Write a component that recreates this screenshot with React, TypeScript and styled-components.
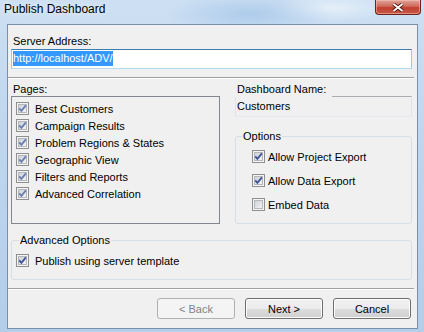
import * as React from 'react';
import styled, { createGlobalStyle } from 'styled-components';

const GlobalStyle = createGlobalStyle`
  html, body {
    margin: 0;
    padding: 0;
  }
  body {
    font-family: "Liberation Sans", Arial, sans-serif;
    font-size: 11px;
    color: #000;
  }
`;

const Window = styled.div`
  position: relative;
  width: 424px;
  height: 332px;
  box-sizing: border-box;
  display: flex;
  flex-direction: column;
  padding: 0 6px 3px 7px;
  overflow: hidden;
  background:
    radial-gradient(ellipse 120px 30px at 250px 14px, rgba(150, 188, 228, 0.55), transparent 70%),
    radial-gradient(ellipse 90px 20px at 330px 8px, rgba(240, 246, 252, 0.7), transparent 70%),
    linear-gradient(to bottom, #cde0f3 0%, #bfd6ee 40%, #b4cde8 100%);
`;

const TitleBar = styled.div`
  flex: none;
  height: 24px;
  box-sizing: border-box;
  margin-left: -3px;
  padding-top: 2px;
  font-size: 12px;
  line-height: 14px;
  color: #000;
  text-shadow: 0 0 6px rgba(255, 255, 255, 0.9);
`;

const CloseButton = styled.div`
  position: absolute;
  top: 0;
  right: 3px;
  width: 46px;
  height: 15px;
  box-sizing: border-box;
  border: 1px solid #6b2218;
  border-top: none;
  border-radius: 0 0 4px 4px;
  background: linear-gradient(to bottom, #e0a59b 0%, #d06a5c 45%, #c0402f 55%, #c8574a 100%);
  box-shadow: inset 0 0 0 1px rgba(255, 200, 190, 0.5);
  display: flex;
  align-items: center;
  justify-content: center;

  svg {
    display: block;
  }
`;

const Client = styled.div`
  flex: 1;
  display: flex;
  flex-direction: column;
  border: 1px solid #7890ad;
  background: #f0f0f0;
  padding: 10px 5px 0 3px;
`;

const FieldLabel = styled.div`
  line-height: 13px;
  padding-left: 2px;
  white-space: nowrap;
`;

const AddressBox = styled.div`
  height: 20px;
  box-sizing: border-box;
  margin-top: 1px;
  border: 1px solid;
  border-color: #3d7bad #a4c9e3 #b7d9ed #a4c9e3;
  background: #fff;
  padding: 0 0 0 1px;
`;

const Selection = styled.span`
  display: inline-block;
  background: #3399ff;
  color: #fff;
  line-height: 15px;
  margin-top: 1px;
`;

const Separator = styled.div<{ $top: number }>`
  height: 0;
  margin: ${(p) => p.$top}px -2px 0 -3px;
  border-top: 1px solid #a0a0a0;
  border-bottom: 1px solid #ffffff;
`;

const MiddleRow = styled.div`
  display: grid;
  grid-template-columns: 209px 1fr;
  column-gap: 15px;
  margin-top: 4px;
`;

const Column = styled.div`
  display: flex;
  flex-direction: column;
`;

const ListBox = styled.div`
  height: 128px;
  box-sizing: border-box;
  border: 1px solid #828790;
  padding: 3px 0 0 4px;
`;

const CheckRow = styled.div<{ $gap: number }>`
  height: 17px;
  display: flex;
  align-items: center;
  gap: ${(p) => p.$gap}px;
  white-space: nowrap;
`;

const NameLabel = styled.div`
  position: relative;
  z-index: 1;
  width: 95px;
  line-height: 13px;
  padding: 0 0 1px 2px;
  margin-bottom: -1px;
  background: #f0f0f0;
  white-space: nowrap;
`;

const NameBox = styled.div`
  height: 21px;
  box-sizing: border-box;
  border: 1px solid;
  border-color: #abadb3 #e2e3ea #e3e9ef #e2e3ea;
  background: #f0f0f0;
  padding-left: 1px;
  line-height: 19px;
`;

const Group = styled.fieldset<{ $top: number; $left: number }>`
  margin: ${(p) => p.$top}px 0 0;
  min-width: 0;
  border: 1px solid #d5dfe5;
  border-radius: 3px;
  padding: 5px 0 10px ${(p) => p.$left}px;
`;

const GroupTitle = styled.legend<{ $shift: number }>`
  padding: 0 1px;
  margin-left: ${(p) => p.$shift}px;
  line-height: 13px;
`;

const OptionList = styled.div`
  display: flex;
  flex-direction: column;
  gap: 7px;
  padding-left: 10px;
`;

const ButtonRow = styled.div`
  display: flex;
  justify-content: flex-end;
  gap: 10px;
  margin: 8px 1px 0 0;
`;

const Button = styled.button`
  width: 78px;
  height: 21px;
  box-sizing: border-box;
  padding: 0;
  font-family: inherit;
  font-size: 11px;
  color: #000;
  border: 1px solid #707070;
  border-radius: 3px;
  background: linear-gradient(to bottom, #f2f2f2 0%, #ebebeb 50%, #dddddd 51%, #cfcfcf 100%);
  box-shadow: inset 0 0 0 1px #fcfcfc;

  &:disabled {
    color: #838383;
    border-color: #adb2b5;
    background: #f4f4f4;
    box-shadow: none;
  }
`;

type Tone = 'light' | 'dark';

const checkColor: Record<Tone, string> = {
  light: '#6a7fb0',
  dark: '#3f5598',
};

const CheckBox = ({ checked, tone = 'dark' }: { checked: boolean; tone?: Tone }) => (
  <svg width="13" height="13" viewBox="0 0 13 13" style={{ flex: 'none', display: 'block' }}>
    <defs>
      <linearGradient id="cbFill" x1="0" y1="0" x2="1" y2="1">
        <stop offset="0" stopColor="#cbcfd5" />
        <stop offset="1" stopColor="#f6f6f6" />
      </linearGradient>
    </defs>
    <rect x="0.5" y="0.5" width="12" height="12" fill="#f4f4f4" stroke="#8e8f8f" />
    <rect x="2.5" y="2.5" width="8" height="8" fill="url(#cbFill)" stroke="#b4b8bd" />
    {checked && (
      <path
        d="M3.2 6.4 L5.4 8.9 L9.9 3.4"
        fill="none"
        stroke={checkColor[tone]}
        strokeWidth="1.9"
        strokeLinejoin="miter"
      />
    )}
  </svg>
);

const pages = [
  'Best Customers',
  'Campaign Results',
  'Problem Regions & States',
  'Geographic View',
  'Filters and Reports',
  'Advanced Correlation',
];

const options = [
  { label: 'Allow Project Export', checked: true },
  { label: 'Allow Data Export', checked: true },
  { label: 'Embed Data', checked: false },
];

export default function App() {
  return (
    <>
      <GlobalStyle />
      <Window>
        <TitleBar>Publish Dashboard</TitleBar>
        <CloseButton>
          <svg width="12" height="9" viewBox="0 0 12 9">
            <path d="M1.5 1 L10.5 8 M10.5 1 L1.5 8" stroke="#4a1810" strokeWidth="3.6" />
            <path d="M1.5 1 L10.5 8 M10.5 1 L1.5 8" stroke="#ffffff" strokeWidth="1.8" />
          </svg>
        </CloseButton>
        <Client>
          <FieldLabel>Server Address:</FieldLabel>
          <AddressBox>
            <Selection>http://localhost/ADV/</Selection>
          </AddressBox>
          <Separator $top={8} />
          <MiddleRow>
            <Column>
              <FieldLabel>Pages:</FieldLabel>
              <ListBox>
                {pages.map((page) => (
                  <CheckRow key={page} $gap={6}>
                    <CheckBox checked tone="light" />
                    {page}
                  </CheckRow>
                ))}
              </ListBox>
            </Column>
            <Column>
              <NameLabel>Dashboard Name:</NameLabel>
              <NameBox>Customers</NameBox>
              <Group $top={13} $left={6}>
                <GroupTitle $shift={0}>Options</GroupTitle>
                <OptionList>
                  {options.map((o) => (
                    <CheckRow key={o.label} $gap={3}>
                      <CheckBox checked={o.checked} />
                      {o.label}
                    </CheckRow>
                  ))}
                </OptionList>
              </Group>
            </Column>
          </MiddleRow>
          <Group $top={10} $left={4}>
            <GroupTitle $shift={3}>Advanced Options</GroupTitle>
            <CheckRow $gap={6}>
              <CheckBox checked />
              Publish using server template
            </CheckRow>
          </Group>
          <Separator $top={8} />
          <ButtonRow>
            <Button disabled>&lt; Back</Button>
            <Button>Next &gt;</Button>
            <Button>Cancel</Button>
          </ButtonRow>
        </Client>
      </Window>
    </>
  );
}
